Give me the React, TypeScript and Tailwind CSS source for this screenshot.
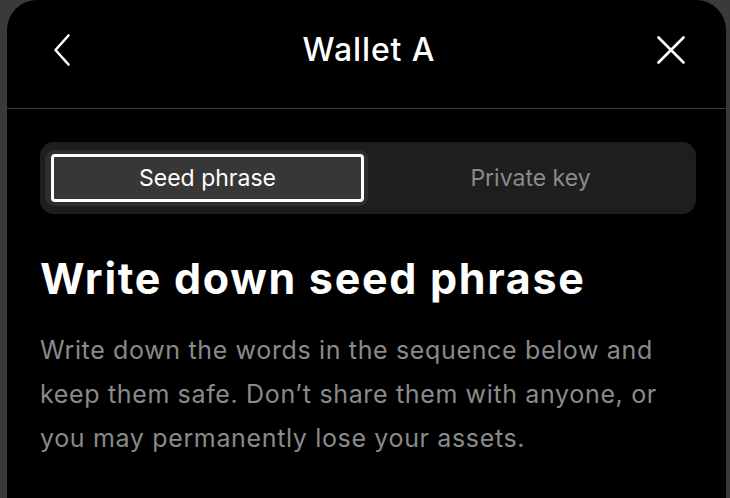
import { useState } from "react";

const font = { fontFamily: "Inter, 'Noto Sans', sans-serif" };

function BackIcon() {
  return (
    <svg width="18" height="34" viewBox="0 0 18 34" fill="none">
      <path d="M15.5 2.5 L2.5 17 L15.5 31.5" stroke="white" strokeWidth="2.6" strokeLinecap="round" strokeLinejoin="round" />
    </svg>
  );
}

function CloseIcon() {
  return (
    <svg width="28" height="28" viewBox="0 0 28 28" fill="none">
      <path d="M1.5 1.5 L26.5 26.5 M26.5 1.5 L1.5 26.5" stroke="white" strokeWidth="2.6" strokeLinecap="round" />
    </svg>
  );
}

export default function App() {
  const [tab, setTab] = useState<"seed" | "key">("seed");

  return (
    <div className="h-[498px] w-[730px] overflow-hidden bg-[#3a3a3a] pl-[7px] pr-[4px]" style={font}>
      <div className="flex h-full flex-col rounded-t-[30px] bg-black">
        {/* header */}
        <div className="flex h-[109px] items-center justify-between border-b border-[#3a3a3a] pl-[46px] pr-[41px] pb-[8px]">
          <button className="flex h-10 w-10 items-center justify-start">
            <BackIcon />
          </button>
          <div className="text-[32px] font-medium tracking-[0.9px] text-white">Wallet A</div>
          <button className="flex h-10 w-10 items-center justify-end">
            <CloseIcon />
          </button>
        </div>

        <div className="flex flex-col pl-[33px] pr-[30px] pt-[33px]">
          {/* tabs */}
          <div className="flex h-[72px] items-center rounded-[14px] bg-[#1e1e1e] px-[5px] py-2">
            <button
              onClick={() => setTab("seed")}
              className={`h-full flex-1 rounded-[9px] py-1 pl-[6px] pr-[4px] ${tab === "seed" ? "bg-[#2e2e2e]" : ""}`}
            >
              <div
                className={`flex h-full items-center justify-center rounded-[4px] text-[23px] ${
                  tab === "seed" ? "border-[3px] border-white bg-[#373737] text-white" : "text-[#8a8a8a]"
                }`}
              >
                Seed phrase
              </div>
            </button>
            <button
              onClick={() => setTab("key")}
              className={`h-full flex-1 rounded-[9px] py-1 pl-[6px] pr-[4px] ${tab === "key" ? "bg-[#2e2e2e]" : ""}`}
            >
              <div
                className={`flex h-full items-center justify-center rounded-[4px] text-[23px] ${
                  tab === "key" ? "border-[3px] border-white bg-[#373737] text-white" : "text-[#8a8a8a]"
                }`}
              >
                Private key
              </div>
            </button>
          </div>

          <h1 className="mt-[40px] text-[43px] font-bold leading-[48px] tracking-[1.7px] text-white">
            Write down seed phrase
          </h1>
          <p className="mt-[26px] w-[664px] text-[25px] leading-[44px] tracking-[0.65px] text-[#8a8a8a]">
            Write down the words in the sequence below and keep them safe. Don’t share them with anyone, or you may
            permanently lose your assets.
          </p>
        </div>
      </div>
    </div>
  );
}
